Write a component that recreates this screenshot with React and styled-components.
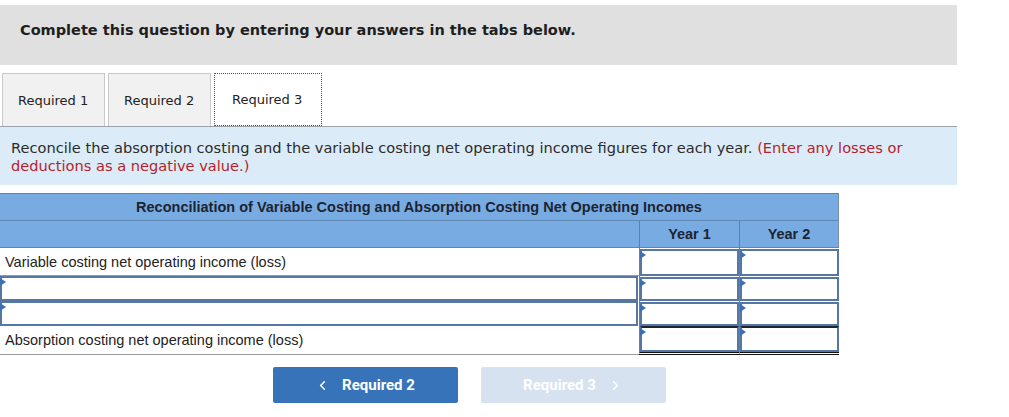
import React from "react";
import styled, { createGlobalStyle } from "styled-components";
import { ChevronLeft, ChevronRight } from "lucide-react";

const GlobalStyle = createGlobalStyle`
  body {
    margin: 0;
    background: #fff;
    font-family: "DejaVu Sans", Verdana, sans-serif;
  }
`;

const tabs = ["Required 1", "Required 2", "Required 3"];

const rows = [
  { label: "Variable costing net operating income (loss)", kind: "label", h: 28 },
  { label: "", kind: "input", h: 25 },
  { label: "", kind: "input", h: 25 },
  { label: "Absorption costing net operating income (loss)", kind: "total", h: 29 },
];

function App() {
  return (
    <Page>
      <GlobalStyle />
      <Banner>Complete this question by entering your answers in the tabs below.</Banner>
      <TabBar>
        {tabs.map((t, i) => (
          <Tab key={t} $active={i === 2}>
            {t}
          </Tab>
        ))}
      </TabBar>
      <Instructions>
        Reconcile the absorption costing and the variable costing net operating income figures for
        each year. <Red>(Enter any losses or deductions as a negative value.)</Red>
      </Instructions>
      <Grid>
        <TitleCell>
          Reconciliation of Variable Costing and Absorption Costing Net Operating Incomes
        </TitleCell>
        <HeadCell />
        <HeadCell $year>Year 1</HeadCell>
        <HeadCell $year $last>Year 2</HeadCell>
        {rows.map((r, i) => (
          <React.Fragment key={i}>
            <LabelCell $h={r.h} $kind={r.kind}>
              {r.kind === "input" ? <Entry $wide /> : r.label}
            </LabelCell>
            <ValueCell $kind={r.kind}>
              <Entry $total={r.kind === "total"} />
            </ValueCell>
            <ValueCell $kind={r.kind}>
              <Entry $total={r.kind === "total"} />
            </ValueCell>
          </React.Fragment>
        ))}
      </Grid>
      <Nav>
        <NavButton>
          <ChevronLeft size={15} strokeWidth={2.5} />
          Required 2
        </NavButton>
        <NavButton $disabled>
          Required 3
          <ChevronRight size={15} strokeWidth={2.5} />
        </NavButton>
      </Nav>
    </Page>
  );
}

const Page = styled.div`
  width: 957px;
  padding-top: 5px;
`;

const Banner = styled.div`
  height: 60px;
  box-sizing: border-box;
  padding: 17px 0 0 20px;
  background: #e0e0e0;
  font-weight: bold;
  font-size: 14.5px;
  color: #1e1e1e;
`;

const TabBar = styled.div`
  display: flex;
  gap: 3px;
  margin-top: 8px;
  padding-left: 2px;
  border-bottom: 1px solid #9aa3ad;
`;

const Tab = styled.div`
  width: ${(p) => (p.$active ? "108px" : "103px")};
  height: 53px;
  box-sizing: border-box;
  display: flex;
  align-items: center;
  padding-left: ${(p) => (p.$active ? "17px" : "15px")};
  font-size: 13px;
  color: #222;
  background: ${(p) => (p.$active ? "#fff" : "#f1f1f1")};
  border: ${(p) => (p.$active ? "1px dotted #3a5a85" : "1px solid #c9c9c9")};
  border-bottom: ${(p) => (p.$active ? "1px dotted #3a5a85" : "none")};
  margin-bottom: ${(p) => (p.$active ? "-1px" : "0")};
`;

const Instructions = styled.div`
  height: 58px;
  box-sizing: border-box;
  padding: 12px 11px 0;
  background: #dcebf8;
  font-size: 14.6px;
  line-height: 18px;
  color: #2b2b2b;
`;

const Red = styled.span`
  color: #b51e2b;
`;

const Grid = styled.div`
  display: grid;
  grid-template-columns: 639px 100px 100px;
  width: 839px;
  margin-top: 8px;
  font-family: "Liberation Sans", Arial, sans-serif;
  font-size: 14.5px;
  color: #222;
`;

const TitleCell = styled.div`
  grid-column: 1 / -1;
  height: 28px;
  box-sizing: border-box;
  display: flex;
  align-items: center;
  justify-content: center;
  background: #79abe3;
  border-top: 1px solid #7a7f86;
  border-bottom: 1px solid #5f88b3;
  border-right: 1px solid #7a8ea6;
  font-weight: bold;
  color: #1c2430;
`;

const HeadCell = styled.div`
  height: 27px;
  box-sizing: border-box;
  display: flex;
  align-items: center;
  justify-content: center;
  background: #79abe3;
  border-bottom: 1px solid #7a7f86;
  border-left: ${(p) => (p.$year ? "1px solid #5d7ea6" : "none")};
  border-right: ${(p) => (p.$last ? "1px solid #7a8ea6" : "none")};
  font-weight: bold;
  color: #1c2430;
`;

const LabelCell = styled.div`
  height: ${(p) => p.$h}px;
  box-sizing: border-box;
  display: flex;
  align-items: center;
  padding-left: ${(p) => (p.$kind === "input" ? "0" : "5px")};
  border-bottom: ${(p) => (p.$kind === "input" ? "none" : "1px solid #9a9a9a")};
`;

const ValueCell = styled.div`
  box-sizing: border-box;
  display: flex;
  padding-top: ${(p) => (p.$kind === "total" ? "0" : "1px")};
  border-left: 1px solid #6c7f99;
  border-bottom: ${(p) => (p.$kind === "total" ? "3px double #111" : "none")};
`;

const Entry = styled.div`
  position: relative;
  flex: 1;
  align-self: stretch;
  box-sizing: border-box;
  border: 2px solid #5676a3;
  border-top-color: ${(p) => (p.$total ? "#1a2433" : "#5676a3")};
  background: #fff;
  ${(p) => (p.$wide ? "margin-right: 1px;" : "")}

  &::before {
    content: "";
    position: absolute;
    left: -2px;
    top: 0;
    border-left: 6px solid #3d6fb5;
    border-top: 4px solid transparent;
    border-bottom: 4px solid transparent;
  }
`;

const Nav = styled.div`
  display: flex;
  justify-content: center;
  gap: 23px;
  width: 938px;
  margin-top: 12px;
`;

const NavButton = styled.div`
  width: 185px;
  height: 36px;
  box-sizing: border-box;
  display: flex;
  align-items: center;
  justify-content: center;
  gap: 12px;
  border-radius: 2px;
  font-family: Roboto, "Liberation Sans", sans-serif;
  font-weight: bold;
  font-size: 15px;
  color: #fff;
  background: ${(p) => (p.$disabled ? "#d6e2f0" : "#3673b8")};
`;

export default App;
